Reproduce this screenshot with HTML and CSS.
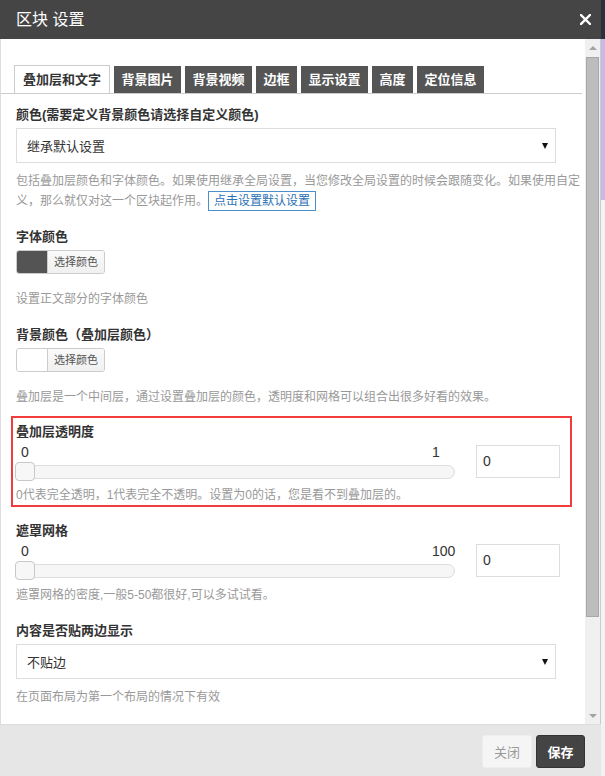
FILE: index.html
```html
<!DOCTYPE html>
<html lang="zh-CN">
<head>
<meta charset="utf-8">
<title>区块 设置</title>
<link rel="stylesheet" href="styles.css">
</head>
<body>
<div class="dialog">
  <div class="dlg-head">
    <span class="dlg-title">区块 设置</span>
    <svg class="dlg-close" width="11" height="11" viewBox="0 0 11 11"><path d="M1 1 L10 10 M10 1 L1 10" stroke="#fff" stroke-width="2.4" stroke-linecap="square"/></svg>
  </div>
  <div class="dlg-body">
    <div class="pane">
      <ul class="tabs">
        <li class="tab active">叠加层和文字</li>
        <li class="tab">背景图片</li>
        <li class="tab">背景视频</li>
        <li class="tab">边框</li>
        <li class="tab">显示设置</li>
        <li class="tab">高度</li>
        <li class="tab">定位信息</li>
      </ul>

      <div class="field field-first">
        <div class="label">颜色(需要定义背景颜色请选择自定义颜色)</div>
        <div class="select"><span>继承默认设置</span><i class="caret"></i></div>
        <div class="help help-block"><span class="help-line">包括叠加层颜色和字体颜色。如果使用继承全局设置，当您修改全局设置的时候会跟随变化。如果使用自定</span><div class="help-line2"><span class="help-line">义，那么就仅对这一个区块起作用。</span><span class="link-btn">点击设置默认设置</span></div></div>
      </div>

      <div class="field">
        <div class="label">字体颜色</div>
        <div class="picker"><span class="swatch swatch-dark"></span><span class="pick-btn">选择颜色</span></div>
        <p class="help">设置正文部分的字体颜色</p>
      </div>

      <div class="field">
        <div class="label">背景颜色（叠加层颜色）</div>
        <div class="picker"><span class="swatch swatch-light"></span><span class="pick-btn">选择颜色</span></div>
        <p class="help">叠加层是一个中间层，通过设置叠加层的颜色，透明度和网格可以组合出很多好看的效果。</p>
      </div>

      <div class="field highlight">
        <div class="label">叠加层透明度</div>
        <div class="row">
          <div class="slider">
            <div class="scale"><span class="min">0</span><span class="max">1</span></div>
            <div class="track"><span class="handle"></span></div>
          </div>
          <div class="num">0</div>
        </div>
        <p class="help">0代表完全透明，1代表完全不透明。设置为0的话，您是看不到叠加层的。</p>
      </div>

      <div class="field">
        <div class="label">遮罩网格</div>
        <div class="row">
          <div class="slider">
            <div class="scale"><span class="min">0</span><span class="max">100</span></div>
            <div class="track"><span class="handle"></span></div>
          </div>
          <div class="num">0</div>
        </div>
        <p class="help">遮罩网格的密度,一般5-50都很好,可以多试试看。</p>
      </div>

      <div class="field">
        <div class="label">内容是否贴两边显示</div>
        <div class="select"><span>不贴边</span><i class="caret"></i></div>
        <p class="help">在页面布局为第一个布局的情况下有效</p>
      </div>
    </div>
    <div class="scrollbar">
      <div class="sb-btn"><i class="sb-up"></i></div>
      <div class="sb-thumb"></div>
      <div class="sb-btn sb-btn-down"><i class="sb-down"></i></div>
    </div>
  </div>
  <div class="dlg-foot">
    <button class="btn btn-close">关闭</button>
    <button class="btn btn-save">保存</button>
  </div>
</div>
</body>
</html>
```

FILE: styles.css
```css
* { box-sizing: border-box; }
html, body { margin: 0; padding: 0; }
body {
  width: 605px;
  height: 776px;
  overflow: hidden;
  font-family: "Liberation Sans", "Noto Sans CJK SC", sans-serif;
  color: #333;
  background: linear-gradient(to bottom, #2c303c 0, #2c303c 39px, #c9b7e6 39px, #c9b7e6 200px, #f3f3f3 200px);
}
.dialog {
  width: 601px;
  height: 776px;
  display: flex;
  flex-direction: column;
  background: #fff;
}
.dlg-head {
  height: 39px;
  flex: none;
  background: #454545;
  display: flex;
  align-items: center;
  justify-content: space-between;
  padding: 0 10px 0 16px;
}
.dlg-title {
  color: #fff;
  font-size: 16px;
  line-height: 39px;
}
.dlg-close { display: block; }

.dlg-body {
  height: 685px;
  flex: none;
  display: flex;
  border-left: 1px solid #ddd;
  border-right: 1px solid #ccc;
  overflow: hidden;
}
.pane {
  width: 584px;
  flex: none;
  padding: 27px 3px 0 15px;
}
.tabs {
  list-style: none;
  margin: 0 0 0 -15px;
  padding: 0 0 0 13px;
  display: flex;
  border-bottom: 1px solid #ccc;
  height: 28px;
}
.tab {
  height: 27px;
  line-height: 27px;
  padding: 0 7.5px;
  margin-right: 4px;
  background: #555;
  color: #fff;
  font-size: 13px;
  font-weight: bold;
}
.tab.active {
  background: #fff;
  color: #333;
  border: 1px solid #ccc;
  border-bottom: none;
  height: 28px;
  line-height: 28px;
  padding: 0 8px 0 8px;
  margin-top: -1px;
}

.field { margin-top: 16px; }
.field-first { margin-top: 11px; }
.label {
  font-size: 13px;
  font-weight: bold;
  line-height: 20px;
  color: #333;
}
.select {
  margin-top: 3px;
  width: 540px;
  height: 35px;
  border: 1px solid #ddd;
  padding: 0 7px 0 10px;
  display: flex;
  align-items: center;
  justify-content: space-between;
  font-size: 13px;
  color: #333;
}
.caret {
  width: 0;
  height: 0;
  border-left: 3px solid transparent;
  border-right: 3px solid transparent;
  border-top: 6px solid #111;
}
.help {
  margin: 8px 0 0 0;
  font-size: 12px;
  line-height: 20px;
  color: #999;
}
.help-line { display: block; white-space: nowrap; }
.help-line2 { display: flex; align-items: flex-start; }
.picker + .help { margin-top: 15px; }
.row + .help { margin-top: 7px; }
.link-btn {
  display: inline-block;
  vertical-align: top;
  border: 1px solid #4d8fcd;
  color: #2a72b5;
  padding: 0 5px;
  line-height: 18px;
  height: 20px;
  white-space: nowrap;
}
.picker {
  margin-top: 3px;
  display: inline-flex;
  height: 24px;
  border: 1px solid #ccc;
  border-radius: 3px;
  overflow: hidden;
  vertical-align: top;
}
.swatch { width: 30px; }
.swatch-dark { background: #545454; }
.swatch-light { background: #fff; }
.pick-btn {
  border-left: 1px solid #ccc;
  padding: 0 6px;
  font-size: 11px;
  line-height: 22px;
  color: #555;
  background: linear-gradient(#fafafa, #f0f0f0);
}

.highlight {
  margin-top: 9px;
  margin-left: -5px;
  width: 561px;
  border: 2px solid #f03c3c;
  padding: 4px 0 0 3px;
}
.highlight + .field { margin-top: 14px; }
.highlight .help { line-height: 19px; }

.row {
  margin-top: 2px;
  display: flex;
  align-items: flex-start;
}
.slider { width: 439px; flex: none; }
.scale {
  display: flex;
  height: 16px;
  line-height: 16px;
  font-size: 14px;
  color: #333;
}
.min { margin-left: 5px; }
.max { margin-left: auto; width: 23px; }
.track {
  position: relative;
  margin-top: 5px;
  height: 14px;
  border: 1px solid #ddd;
  border-radius: 7px;
  background: #f6f6f6;
}
.handle {
  position: absolute;
  left: -2px;
  top: -4px;
  width: 20px;
  height: 19px;
  border: 1px solid #c8c8c8;
  border-radius: 4px;
  background: #f7f7f7;
}
.num {
  margin: 1px 0 0 21px;
  width: 84px;
  height: 33px;
  border: 1px solid #ddd;
  padding-left: 6px;
  font-size: 14px;
  line-height: 31px;
  color: #333;
}

.scrollbar {
  width: 15px;
  flex: none;
  background: #f0f0f0;
  display: flex;
  flex-direction: column;
  align-items: center;
}
.sb-btn {
  height: 17px;
  width: 15px;
  display: flex;
  align-items: center;
  justify-content: center;
  flex: none;
}
.sb-btn-down { margin-top: auto; }
.sb-up {
  width: 0; height: 0;
  border-left: 4px solid transparent;
  border-right: 4px solid transparent;
  border-bottom: 4px solid #a3a3a3;
}
.sb-down {
  width: 0; height: 0;
  border-left: 4px solid transparent;
  border-right: 4px solid transparent;
  border-top: 4px solid #a3a3a3;
}
.sb-thumb {
  margin-top: 1px;
  width: 13px;
  height: 560px;
  background: #bdbdbd;
  border: 1px solid #a8a8a8;
  flex: none;
}

.dlg-foot {
  height: 52px;
  flex: none;
  background: #e6e6e6;
  border-top: 1px solid #dcdcdc;
  display: flex;
  justify-content: flex-end;
  align-items: flex-start;
  padding: 10px 16px 0 0;
  gap: 4px;
}
.btn {
  height: 33px;
  border-radius: 3px;
  font-family: "Liberation Sans", "Noto Sans CJK SC", sans-serif;
  font-size: 13px;
  padding: 0;
  cursor: pointer;
}
.btn-close {
  width: 50px;
  background: #f5f5f5;
  border: 1px solid #eee;
  color: #999;
}
.btn-save {
  width: 49px;
  background: #444;
  border: 1px solid #333;
  color: #fff;
  font-weight: bold;
}
```
